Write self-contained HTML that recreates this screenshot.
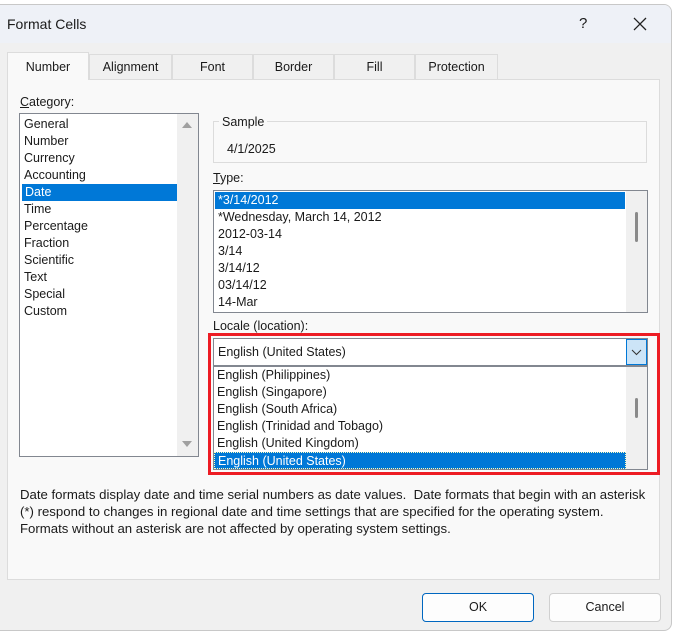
<!DOCTYPE html>
<html><head><meta charset="utf-8"><style>
*{margin:0;padding:0;box-sizing:border-box}
body{width:679px;height:634px;background:#fff;font-family:"Liberation Sans",sans-serif;font-size:12px;color:#1a1a1a;position:relative;overflow:hidden}
.win{position:absolute;left:0;top:4px;width:672px;height:627px;background:#f0f0f0;border:1px solid #c8c8c8;border-left:none;border-radius:0 8px 8px 0;overflow:hidden}
.title{position:absolute;left:0;top:0;width:100%;height:38px;background:#eef1f7}
.abs{position:absolute;white-space:nowrap}
.panel{position:absolute;left:7px;top:74px;width:653px;height:501px;background:#f9f9f9;border:1px solid #dcdcdc}
.tab{position:absolute;top:49px;height:25px;border:1px solid #dcdcdc;border-bottom:none;background:#f0f0f0;text-align:center;line-height:25px;font-size:12.5px}
.list{position:absolute;background:#fff;border:1px solid #828790}
.it{position:absolute;left:4px;height:17px;line-height:17px;font-size:12.5px;white-space:nowrap}
.sel{background:#0078d7;color:#fff}
.btn{position:absolute;top:588px;width:112px;height:29px;border:1px solid #d0d0d0;border-radius:4px;background:#fdfdfd;text-align:center;line-height:27px;font-size:12.5px}
</style></head><body>
<div class="win">
<div class="title"></div>
<div class="abs" style="left:7px;top:11px;font-size:14px">Format Cells</div>
<div class="abs" style="left:579px;top:10px;font-size:15px">?</div>
<svg class="abs" style="left:633px;top:12px" width="14" height="14"><path d="M1 1L13 13M13 1L1 13" stroke="#222" stroke-width="1.3"/></svg>
<div class="panel"></div>
<div class="tab" style="left:7px;top:47px;height:28px;width:82px;background:#f9f9f9;line-height:28px">Number</div>
<div class="tab" style="left:89px;width:83px">Alignment</div>
<div class="tab" style="left:172px;width:81px">Font</div>
<div class="tab" style="left:253px;width:81px">Border</div>
<div class="tab" style="left:334px;width:81px">Fill</div>
<div class="tab" style="left:415px;width:83px">Protection</div>
<div class="abs" style="left:20px;top:90px;font-size:12.5px"><u>C</u>ategory:</div>
<div class="list" style="left:19px;top:108px;width:180px;height:344px">
 <div class="abs" style="right:0;top:0;width:21px;height:342px;background:#f0f0f0"></div>
 <svg class="abs" style="right:6px;top:8px" width="10" height="7"><path d="M0 6L5 0L10 6Z" fill="#a0a0a0"/></svg>
 <svg class="abs" style="right:6px;bottom:8px" width="10" height="7"><path d="M0 0L5 6L10 0Z" fill="#a0a0a0"/></svg>
 <div class="it" style="top:2px">General</div>
 <div class="it" style="top:19px">Number</div>
 <div class="it" style="top:36px">Currency</div>
 <div class="it" style="top:53px">Accounting</div>
 <div class="it sel" style="top:70px;left:2px;width:155px;padding-left:3px">Date</div>
 <div class="it" style="top:87px">Time</div>
 <div class="it" style="top:104px">Percentage</div>
 <div class="it" style="top:121px">Fraction</div>
 <div class="it" style="top:138px">Scientific</div>
 <div class="it" style="top:155px">Text</div>
 <div class="it" style="top:172px">Special</div>
 <div class="it" style="top:189px">Custom</div>
</div>
<div class="abs" style="left:213px;top:116px;width:434px;height:42px;border:1px solid #dcdcdc"></div>
<div class="abs" style="left:219px;top:110px;background:#f9f9f9;padding:0 3px;font-size:12.5px">Sample</div>
<div class="abs" style="left:227px;top:137px;font-size:12.5px">4/1/2025</div>
<div class="abs" style="left:213px;top:166px;font-size:12.5px"><u>T</u>ype:</div>
<div class="list" style="left:213px;top:185px;width:435px;height:123px">
 <div class="abs" style="right:0;top:0;width:21px;height:121px;background:#f0f0f0"></div>
 <div class="abs" style="right:9px;top:21px;width:3px;height:30px;background:#8a8a8a;border-radius:2px"></div>
 <div class="it sel" style="top:1px;left:1px;width:410px;padding-left:3px">*3/14/2012</div>
 <div class="it" style="top:18px">*Wednesday, March 14, 2012</div>
 <div class="it" style="top:35px">2012-03-14</div>
 <div class="it" style="top:52px">3/14</div>
 <div class="it" style="top:69px">3/14/12</div>
 <div class="it" style="top:86px">03/14/12</div>
 <div class="it" style="top:103px">14-Mar</div>
</div>
<div class="abs" style="left:213px;top:314px;font-size:12.5px">Locale (location):</div>
<div class="abs" style="left:208px;top:328px;width:452px;height:142px;border:3px solid #ed1c24"></div>
<div class="abs" style="left:213px;top:333px;width:435px;height:28px;background:#fff;border:1px solid #828790"></div>
<div class="abs" style="left:218px;top:340px;font-size:12.5px">English (United States)</div>
<div class="abs" style="left:626px;top:334px;width:21px;height:26px;background:#cce4f7;border:1px solid #0078d7"></div>
<svg class="abs" style="left:631px;top:344px" width="11" height="7"><path d="M1 1L5.5 5.5L10 1" stroke="#333" fill="none"/></svg>
<div class="list" style="left:213px;top:361px;width:435px;height:104px">
 <div class="abs" style="right:0;top:0;width:21px;height:102px;background:#f0f0f0"></div>
 <div class="abs" style="right:9px;top:31px;width:3px;height:20px;background:#8a8a8a;border-radius:2px"></div>
 <div class="it" style="top:0px;left:3px">English (Philippines)</div>
 <div class="it" style="top:17px;left:3px">English (Singapore)</div>
 <div class="it" style="top:34px;left:3px">English (South Africa)</div>
 <div class="it" style="top:51px;left:3px">English (Trinidad and Tobago)</div>
 <div class="it" style="top:68px;left:3px">English (United Kingdom)</div>
 <div class="it sel" style="top:85px;left:0;width:412px;padding-left:3px;border:1px dotted #ffb">English (United States)</div>
</div>
<div class="abs" style="left:20px;top:481px;font-size:13.2px;line-height:17px">Date formats display date and time serial numbers as date values.&nbsp; Date formats that begin with an asterisk<br>(*) respond to changes in regional date and time settings that are specified for the operating system.<br>Formats without an asterisk are not affected by operating system settings.</div>
<div class="btn" style="left:422px;border:1px solid #0067c0">OK</div>
<div class="btn" style="left:549px">Cancel</div>
</div>
</body></html>
